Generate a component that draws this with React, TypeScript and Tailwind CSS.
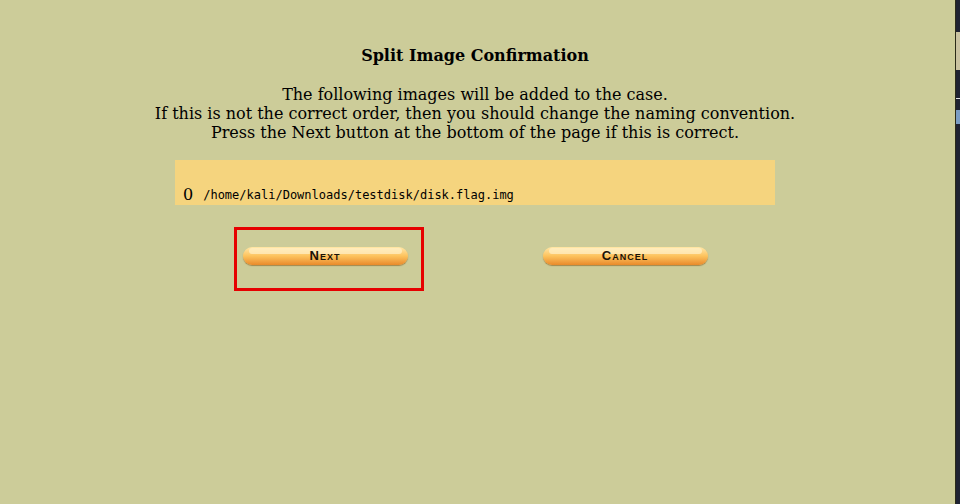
import * as React from "react";

const PillButton: React.FC<{ label: string }> = ({ label }) => {
    return (
        <button
            className="relative h-[18px] w-[165px] rounded-full bg-gradient-to-b from-[#ffe7a6] via-[#fdc35c] to-[#e88a2a] shadow-[0_1px_1px_rgba(120,70,0,0.5)] flex items-center justify-center pb-[2px]"
        >
            <span className="absolute left-[6px] right-[6px] top-[1px] h-[6px] rounded-full bg-[#fff1c9] opacity-70"></span>
            <span
                className="relative text-[13px] font-black tracking-[1px] text-[#1a1208] leading-none"
                style={{ fontFamily: '"Liberation Sans", Arial, sans-serif', fontVariant: "small-caps" }}
            >
                {label}
            </span>
        </button>
    );
};

export default function App() {
    return (
        <div className="flex w-[960px] h-[504px] overflow-hidden bg-[#cccc99]">
            <div
                className="w-[955px] h-full text-black"
                style={{ fontFamily: '"DejaVu Serif", serif' }}
            >
                <div className="w-[950px] flex flex-col items-center pt-[45px]">
                    <h3 className="text-[16px] font-bold leading-[22px]">Split Image Confirmation</h3>
                    <div className="mt-[18px] text-[16px] leading-[19px] text-center">
                        <p>The following images will be added to the case.</p>
                        <p>If this is not the correct order, then you should change the naming convention.</p>
                        <p>Press the Next button at the bottom of the page if this is correct.</p>
                    </div>

                    <div className="mt-[18px] w-[600px] h-[45px] bg-[#f5d47e] flex items-end pl-[8px]">
                        <span className="text-[16px] leading-[20px]">0</span>
                        <span
                            className="ml-[10px] text-[12px] leading-[20px]"
                            style={{ fontFamily: '"DejaVu Sans Mono", monospace' }}
                        >
                            /home/kali/Downloads/testdisk/disk.flag.img
                        </span>
                    </div>

                    <div className="w-[600px] grid grid-cols-2 mt-[42px]">
                        <div className="flex justify-center relative">
                            <PillButton label="Next" />
                            <div className="absolute left-[59px] top-[-20px] w-[190px] h-[64px] border-[3px] border-[#e60000]"></div>
                        </div>
                        <div className="flex justify-center">
                            <PillButton label="Cancel" />
                        </div>
                    </div>
                </div>
            </div>
            <div className="w-[1px] h-full bg-[#2a2a18]"></div>
            <div className="flex-1 h-full bg-[#1f2232] flex flex-col">
                <div className="h-[32px]"></div>
                <div className="h-[38px] bg-[#c9c2a0]"></div>
                <div className="h-[28px]"></div>
                <div className="h-[1px] bg-[#e0e0e0]"></div>
                <div className="h-[11px]"></div>
                <div className="h-[14px] bg-[#7a9cc4]"></div>
            </div>
        </div>
    );
}
